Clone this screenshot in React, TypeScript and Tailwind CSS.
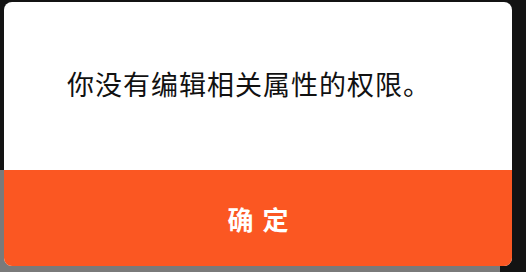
import React from 'react';

// Permission alert dialog
export default function App() {
  return (
    <div
      className="w-[526px] h-[272px] bg-[#131313] bg-[linear-gradient(to_bottom,transparent_170px,#7a7a7a_170px)] bg-no-repeat bg-[length:500px_100%] pl-[4px] pt-[2px]"
      style={{ fontFamily: '"Noto Sans CJK SC", "Noto Sans", sans-serif' }}
    >
      <div className="w-[508px] h-[264px] rounded-[8px] overflow-hidden flex flex-col bg-white">
        <div className="h-[168px] flex items-center pl-[63px]">
          <p className="text-[27px] leading-none tracking-[1px] text-[#111] -mt-[6px]">
            你没有编辑相关属性的权限。
          </p>
        </div>
        <button className="flex-1 bg-[#fb5722] text-white text-[26px] font-bold tracking-[9px] pl-[9px] flex items-center justify-center">
          确定
        </button>
      </div>
    </div>
  );
}
